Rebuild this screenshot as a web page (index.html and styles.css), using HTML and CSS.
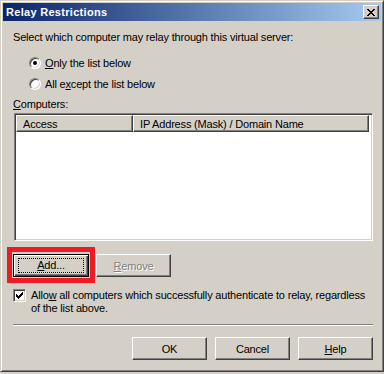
FILE: index.html
```html
<!DOCTYPE html>
<html lang="en">
<head>
    <meta charset="UTF-8">
    <title>Relay Restrictions</title>
    <link rel="stylesheet" href="styles.css">
</head>
<body>
    <div class="window">
        <!-- Title bar -->
        <div class="titlebar">
            <span class="title">Relay Restrictions</span>
            <button class="close-btn">
                <svg width="8" height="7" viewBox="0 0 8 7" shape-rendering="crispEdges">
                    <path d="M0 0h2v1h-2zM6 0h2v1h-2zM1 1h2v1h-2zM5 1h2v1h-2zM2 2h4v1h-4zM3 3h2v1h-2zM2 4h4v1h-4zM1 5h2v1h-2zM5 5h2v1h-2zM0 6h2v1h-2zM6 6h2v1h-2z" fill="#000"/>
                </svg>
            </button>
        </div>

        <div class="content">
            <p class="intro">Select which computer may relay through this virtual server:</p>

            <!-- Relay options -->
            <div class="options">
                <label class="radio">
                    <span class="radio-box checked"></span>
                    <span><u>O</u>nly the list below</span>
                </label>
                <label class="radio">
                    <span class="radio-box"></span>
                    <span>All e<u>x</u>cept the list below</span>
                </label>
            </div>

            <!-- Computers list -->
            <div class="list-label"><u>C</u>omputers:</div>
            <div class="listview">
                <div class="lv-header">
                    <div class="lv-col col-access">Access</div>
                    <div class="lv-col col-ip">IP Address (Mask) / Domain Name</div>
                </div>
                <div class="lv-body"></div>
            </div>

            <div class="list-buttons">
                <div class="marked">
                    <button class="btn default"><span class="focus"><u>A</u>dd...</span></button>
                </div>
                <button class="btn disabled"><u>R</u>emove</button>
            </div>

            <label class="check">
                <span class="check-box">
                    <svg width="7" height="7" viewBox="0 0 7 7" shape-rendering="crispEdges">
                        <path d="M6 0h1v3h-1zM5 1h1v3h-1zM4 2h1v3h-1zM3 3h1v3h-1zM2 4h1v3h-1zM1 3h1v3h-1zM0 2h1v3h-1z" fill="#000"/>
                    </svg>
                </span>
                <span class="check-text">Allo<u>w</u> all computers which successfully authenticate to relay, regardless<br>of the list above.</span>
            </label>

            <div class="separator"></div>

            <!-- Dialog buttons -->
            <div class="dialog-buttons">
                <button class="btn">OK</button>
                <button class="btn">Cancel</button>
                <button class="btn"><u>H</u>elp</button>
            </div>
        </div>
    </div>
</body>
</html>
```

FILE: styles.css
```css
/* Basic Reset */
body {
    margin: 0;
    padding: 0;
    background: #d4d0c8;
    font-family: 'Liberation Sans', Arial, sans-serif;
    font-size: 11px;
    letter-spacing: -0.18px;
    color: #000;
}

u {
    text-decoration: underline;
    text-underline-offset: 1px;
}

/* Window frame */
.window {
    box-sizing: border-box;
    width: 384px;
    height: 372px;
    padding: 2px;
    background: #d4d0c8;
    border: 1px solid;
    border-color: #d4d0c8 #404040 #404040 #d4d0c8;
    box-shadow: inset 1px 1px #fff, inset -1px -1px #808080;
    display: flex;
    flex-direction: column;
}

/* Title bar */
.titlebar {
    height: 18px;
    display: flex;
    align-items: center;
    justify-content: space-between;
    padding: 0 2px;
    background: linear-gradient(to right, #0a246a, #a6caf0);
}

.title {
    color: #fff;
    font-weight: bold;
    font-size: 11px;
    letter-spacing: 0.3px;
    padding-left: 1px;
}

.close-btn {
    box-sizing: border-box;
    width: 16px;
    height: 14px;
    padding: 0;
    display: flex;
    align-items: center;
    justify-content: center;
    background: #d4d0c8;
    border: 1px solid;
    border-color: #fff #404040 #404040 #fff;
    box-shadow: inset -1px -1px #808080;
}

/* Dialog content */
.content {
    flex: 1;
    padding: 0 8px 0 10px;
    display: flex;
    flex-direction: column;
}

.intro {
    margin: 10px 0 0 0;
    line-height: 13px;
}

.options {
    display: flex;
    flex-direction: column;
    gap: 8px;
    margin: 12px 0 0 16px;
}

.radio {
    display: flex;
    align-items: center;
    gap: 4px;
    height: 13px;
}

.radio-box {
    box-sizing: border-box;
    width: 12px;
    height: 12px;
    border-radius: 50%;
    background: #fff;
    border: 1px solid;
    border-color: #808080 #fff #fff #808080;
    box-shadow: inset 1px 1px #404040, inset -1px -1px #d4d0c8;
    display: flex;
    align-items: center;
    justify-content: center;
}

.radio-box.checked::after {
    content: "";
    width: 4px;
    height: 4px;
    border-radius: 50%;
    background: #000;
}

.list-label {
    margin-top: 8px;
    line-height: 13px;
}

/* List view */
.listview {
    box-sizing: border-box;
    height: 128px;
    margin: 2px 0 0 1px;
    background: #fff;
    border: 1px solid;
    border-color: #808080 #fff #fff #808080;
    box-shadow: inset 1px 1px #404040, inset -1px -1px #d4d0c8;
    padding: 1px;
}

.lv-header {
    display: flex;
    height: 17px;
    margin-right: 2px;
}

.lv-col {
    box-sizing: border-box;
    background: #d4d0c8;
    border: 1px solid;
    border-color: #fff #404040 #404040 #fff;
    box-shadow: inset -1px -1px #808080;
    padding: 2px 6px;
    line-height: 12px;
}

.col-access {
    width: 117px;
}

.col-ip {
    flex: 1;
}

/* Buttons */
.btn {
    box-sizing: border-box;
    width: 75px;
    height: 23px;
    padding: 0;
    background: #d4d0c8;
    font-family: inherit;
    font-size: 11px;
    letter-spacing: inherit;
    color: #000;
    border: 1px solid;
    border-color: #fff #404040 #404040 #fff;
    box-shadow: inset -1px -1px #808080, inset 1px 1px #d4d0c8;
}

.btn.default {
    width: 76px;
    border: 1px solid #000;
    box-shadow: inset 1px 1px #fff, inset -1px -1px #404040, inset -2px -2px #808080;
    display: flex;
    align-items: center;
    justify-content: center;
}

.btn .focus {
    display: block;
    width: 64px;
    height: 13px;
    line-height: 13px;
    border: 1px dotted #000;
}

.btn.disabled {
    color: #808080;
    text-shadow: 1px 1px #fff;
}

.list-buttons {
    display: flex;
    gap: 7px;
    margin-top: 13px;
}

/* red annotation frame around Add */
.marked {
    position: relative;
}

.marked::after {
    content: "";
    position: absolute;
    left: -6px;
    top: -7px;
    right: -6px;
    bottom: -6px;
    border: 5px solid #ed1c24;
}

/* Checkbox */
.check {
    display: flex;
    align-items: flex-start;
    gap: 5px;
    margin-top: 12px;
    line-height: 13px;
}

.check-box {
    box-sizing: border-box;
    flex: none;
    width: 13px;
    height: 13px;
    background: #fff;
    border: 1px solid;
    border-color: #808080 #fff #fff #808080;
    box-shadow: inset 1px 1px #404040, inset -1px -1px #d4d0c8;
    display: flex;
    align-items: center;
    justify-content: center;
}

.check-text {
    white-space: nowrap;
}

.separator {
    height: 0;
    margin-top: 9px;
    border-top: 1px solid #808080;
    border-bottom: 1px solid #fff;
}

.dialog-buttons {
    display: flex;
    justify-content: flex-end;
    gap: 8px;
    margin-top: 11px;
}
```
